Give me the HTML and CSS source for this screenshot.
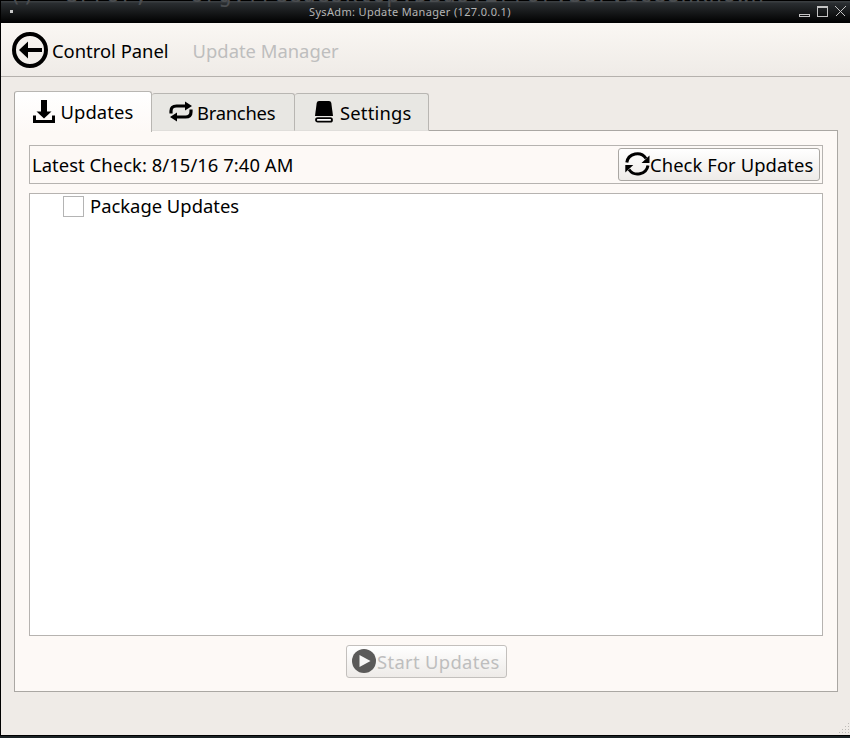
FILE: index.html
```html
<!DOCTYPE html>
<html lang="en">
<head>
<meta charset="utf-8">
<title>SysAdm: Update Manager</title>
<link rel="stylesheet" href="styles.css">
</head>
<body>
<div class="window">
  <header class="titlebar">
    <div class="terminal">()&nbsp; error,&nbsp;&nbsp; org.freedesktop.DBus.Error.ServiceUnknown</div>
    <span class="dot"></span>
    <span class="title">SysAdm: Update Manager (127.0.0.1)</span>
    <svg class="controls" width="50" height="14" viewBox="0 0 50 14" fill="none" stroke="#c4c4c4" shape-rendering="crispEdges"><path d="M.5 9.500h10v2H.5zM18.500 1.500h10v10h-10zM18 2.500h11"/><path d="M36.500 1.500l10 10M46.500 1.500l-10 10"/></svg>
  </header>
  <nav class="toolbar">
    <svg width="36" height="36" viewBox="0 0 36 36"><circle cx="18" cy="18" r="16" fill="none" stroke="#000" stroke-width="4"/><path d="M7 18l9-8.500v6.500h14v4H16v6.500z"/></svg>
    <span class="back">Control Panel</span>
    <span class="page-name">Update Manager</span>
  </nav>
  <main class="content">
    <div class="tabs">
      <div class="tab active"><svg width="22" height="24" viewBox="0 0 22 24"><path d="M8 0h6v11.500h4.500L11 18.500 3.500 11.500H8zM0 15.500h3v4.500h16v-4.500h3V23H0z"/></svg><span>Updates</span></div>
      <div class="tab branches"><svg width="24" height="22" viewBox="0 0 24 22"><path d="M2 12.500V10Q2 5 7.500 5H17M22 8.500V11q0 5-5.500 5H7" fill="none" stroke="#000" stroke-width="3.200"/><path d="M16 .5l7 4.500-7 4.500zM8 11.500v9L1 16z"/></svg><span>Branches</span></div>
      <div class="tab settings"><svg width="18" height="22" viewBox="0 0 18 22"><path d="M4 0h10q2 0 2.300 2L18 15H0L1.700 2Q2 0 4 0z"/><rect x="1" y="17.200" width="16" height="3.500" rx="1.700" fill="#fff" stroke="#000" stroke-width="1.800"/></svg><span>Settings</span></div>
    </div>
    <section class="panel">
      <div class="check-row">
        <span class="latest">Latest Check: 8/15/16 7:40 AM</span>
        <button class="button check"><svg width="25" height="24" viewBox="0 0 25 24"><path d="M1.800 10.500A10.500 10.300 0 0 1 21 6.500M23 13.500A10.500 10.300 0 0 1 4 17.500" fill="none" stroke="#000" stroke-width="3"/><path d="M24.500 3.500V11H16.500zM.3 20.500V13h8z"/></svg><span>Check For Updates</span></button>
      </div>
      <div class="list"><div class="item"><i class="checkbox"></i><span>Package Updates</span></div></div>
      <button class="button start" disabled><svg width="24" height="24" viewBox="0 0 24 24"><circle cx="12" cy="12" r="12" fill="#5b5a59"/><path d="M7.500 6l11 6-11 6z" fill="#f8f7f6"/></svg><span>Start Updates</span></button>
    </section>
    <svg class="grip" width="11" height="11" fill="#bdbab6" shape-rendering="crispEdges"><path d="M9 0h1v1H9zM6 3h1v1H6zM9 3h1v1H9zM3 6h1v1H3zM6 6h1v1H6zM9 6h1v1H9zM0 9h1v1H0zM3 9h1v1H3zM6 9h1v1H6zM9 9h1v1H9z"/></svg>
  </main>
</div>
<footer class="taskbar"></footer>
</body>
</html>
```
FILE: styles.css
```css
* { box-sizing: border-box; }
body { margin: 0; width: 850px; height: 738px; overflow: hidden; background: #000; color: #000; font: 18.4px/26px "Noto Sans", sans-serif; }
svg { display: block; flex: none; }
span { white-space: nowrap; }
.window { height: 735px; margin-left: 1px; display: flex; flex-direction: column; background: #efebe7; }
.titlebar { position: relative; height: 23px; flex: none; display: flex; align-items: center; background: linear-gradient(#000 0 1px, #3a3e41 1px 2px, #2a2e31 3px, #000); color: #b5b5b5; font-size: 11px; line-height: 20px; overflow: hidden; }
.dot { width: 3px; height: 3px; margin-left: 9px; background: #c8c8c8; }
.title { position: relative; margin-left: 296px; padding-top: 1px; letter-spacing: .34px; }
.controls { margin-left: auto; margin-right: 1px; }
.terminal { position: absolute; left: 7px; top: -18px; color: #4a4d50; font: 23.1px/24px "DejaVu Sans Mono", monospace; letter-spacing: .1px; white-space: nowrap; }
.toolbar { height: 54px; flex: none; display: flex; align-items: center; padding: 0 0 0 11px; background: linear-gradient(#faf7f3, #efebe7); border-bottom: 1px solid #b5b1ad; }
.back { margin: 2px 0 0 4px; }
.page-name { margin: 2px 0 0 24px; color: #bebebe; }
.content { position: relative; flex: 1; padding: 14px 12px 0 13px; }
.tabs { height: 40px; display: flex; align-items: flex-end; position: relative; margin-bottom: -1px; }
.tab { height: 38px; display: flex; align-items: center; background: #e8e7e3; border: 1px solid #b8b6b2; border-left: 0; border-bottom-color: #e0dedb; border-radius: 3px 3px 0 0; padding: 2px 0 0 17px; }
.tab.active { height: 41px; align-self: flex-start; width: 138px; padding: 0 0 0 18px; border-left: 1px solid #aaa7a3; border-bottom: 0; background: linear-gradient(#fff, #fdf9f6); }
.tab span { margin-left: 5px; }
.tab.active span { margin-left: 5.500px; letter-spacing: .1px; }
.branches { width: 143px; }
.branches svg { margin-top: -3px; }
.tab.branches span { margin-left: 4px; letter-spacing: -.25px; }
.settings { width: 134px; padding-left: 20px; }
.settings svg { margin-top: -3px; }
.tab.settings span { margin-left: 7px; letter-spacing: .2px; }
.panel { height: 562px; background: #fdf9f6; border: 1px solid #aaa7a3; padding: 14px; }
.check-row { height: 39px; display: flex; justify-content: space-between; align-items: center; border: 1px solid #b6b3b0; padding: 0 2px; }
.latest { letter-spacing: .06px; }
.button { height: 33px; display: flex; align-items: center; padding: 0 6px; font: inherit; color: #000; border: 1px solid #aaa7a3; border-radius: 3px; background: linear-gradient(#fff, #eeebe8); }
.check { width: 202px; padding: 0 0 0 6px; letter-spacing: .08px; }
.check svg, .start svg { margin-top: -2px; }
.list { height: 443px; margin-top: 9px; background: #fff; border: 1px solid #b6b3b0; }
.item { display: flex; align-items: center; padding-left: 33px; margin-top: -1px; }
.checkbox { width: 21px; height: 21px; border: 1px solid #b4b4b4; background: #fff; margin-right: 6px; }
.start { width: 161px; margin: 9px auto 0 317px; color: #bebebe; border-color: #c3c0bd; padding: 0 5px; letter-spacing: .33px; }
.start span { margin-left: 1px; }
.grip { position: absolute; right: 0; bottom: 1px; }
.taskbar { height: 3px; background: linear-gradient(#000 1px, #1b2225 1px); }
```
